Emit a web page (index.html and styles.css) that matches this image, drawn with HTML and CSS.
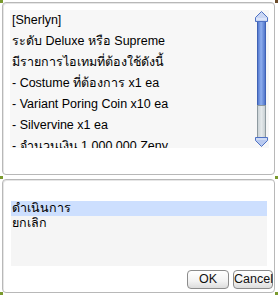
FILE: index.html
```html
<!DOCTYPE html>
<html>
<head>
<meta charset="utf-8">
<link rel="stylesheet" href="styles.css">
</head>
<body>
<div class="frame">
  <div class="panel top">
    <div class="textarea">
      <div class="lines">
        <div>[Sherlyn]</div>
        <div>ระดับ Deluxe หรือ Supreme</div>
        <div>มีรายการไอเทมที่ต้องใช้ดังนี้</div>
        <div>- Costume ที่ต้องการ x1 ea</div>
        <div>- Variant Poring Coin x10 ea</div>
        <div>- Silvervine x1 ea</div>
        <div>- จำนวนเงิน 1,000,000 Zeny</div>
      </div>
      <svg class="scroll" width="14" height="138" viewBox="0 0 14 138">
        <defs>
          <linearGradient id="thumb" x1="0" x2="1" y1="0" y2="0">
            <stop offset="0" stop-color="#4d73cc"/>
            <stop offset="0.45" stop-color="#8eaeee"/>
            <stop offset="1" stop-color="#4a6fc6"/>
          </linearGradient>
          <linearGradient id="track" x1="0" x2="1" y1="0" y2="0">
            <stop offset="0" stop-color="#c8d0d4"/>
            <stop offset="0.5" stop-color="#e4e9eb"/>
            <stop offset="1" stop-color="#c4ccd0"/>
          </linearGradient>
        </defs>
        <rect x="2.5" y="11.5" width="8" height="84" fill="url(#thumb)" stroke="#3f62b4"/>
        <rect x="2.5" y="95.5" width="8" height="32" fill="url(#track)" stroke="#8e9aa0"/>
        <polygon points="6.5,1.5 12.5,7.5 12.5,11.5 0.5,11.5 0.5,7.5" fill="#c9d6f3" stroke="#4f72c4"/>
        <line x1="1" y1="9" x2="12" y2="9" stroke="#eef3ff"/>
        <polygon points="0.5,127.5 12.5,127.5 12.5,130.5 6.5,136.5 0.5,130.5" fill="#b8c9ef" stroke="#4f72c4"/>
        <line x1="1" y1="129" x2="12" y2="129" stroke="#e6edfc"/>
      </svg>
    </div>
  </div>
  <div class="panel bottom">
    <div class="list">
      <div class="item selected">ดำเนินการ</div>
      <div class="item">ยกเลิก</div>
    </div>
    <div class="buttons">
      <button class="btn ok">OK</button>
      <button class="btn cancel">Cancel</button>
    </div>
  </div>
  <span class="mark tl"></span>
  <span class="mark tr"></span>
  <span class="mark ml"></span>
  <span class="mark mr"></span>
  <span class="mark bl"></span>
  <span class="mark br"></span>
</div>
</body>
</html>
```
FILE: styles.css
```css
html, body {
  margin: 0;
  padding: 0;
  background: #ffffff;
}
body {
  width: 278px;
  height: 295px;
  overflow: hidden;
  font-family: "DejaVu Sans", "Noto Sans", "Liberation Sans", sans-serif;
  font-size: 12px;
  color: #000;
}
.frame {
  position: relative;
  width: 278px;
  height: 295px;
  padding: 2px 3px 2px 2px;
  box-sizing: border-box;
  display: flex;
  flex-direction: column;
  gap: 4px;
}
.panel {
  border: 1px solid #b8b8b8;
  border-radius: 4px;
  box-shadow: inset 1px 1px 0 #e6e6e6;
  background: #fff;
}
.panel.top {
  height: 173px;
  box-sizing: border-box;
  padding: 7px 5px 0 7px;
}
.textarea {
  height: 138px;
  background: #f7f7f7;
  display: flex;
  overflow: hidden;
}
.lines {
  flex: 1;
  padding-left: 2px;
  line-height: 21px;
  font-family: "Liberation Sans", "Noto Sans", sans-serif;
  font-size: 12.5px;
  white-space: nowrap;
  overflow: hidden;
}
.scroll {
  flex: none;
  display: block;
}
.panel.bottom {
  flex: 1;
  padding: 21px 7px 2px 8px;
  display: flex;
  flex-direction: column;
}
.list {
  height: 65px;
  background: #f5f5f5;
  font-family: "Liberation Sans", "Noto Sans", sans-serif;
  font-size: 12.5px;
}
.item {
  height: 15px;
  line-height: 15px;
  padding-left: 1px;
}
.item.selected {
  background: #cddffe;
}
.buttons {
  display: flex;
  justify-content: flex-end;
  gap: 4px;
  margin-top: 4px;
  margin-right: -6px;
}
.btn {
  height: 19px;
  padding: 0;
  border: 1px solid #8c8c8c;
  border-radius: 4px;
  background: linear-gradient(#ffffff, #f2f2f2 60%, #dcdcdc);
  font-family: "Liberation Sans", sans-serif;
  font-size: 12.5px;
  color: #111;
  line-height: 17px;
}
.btn.ok { width: 42px; }
.btn.cancel { width: 40px; }
.mark {
  position: absolute;
  width: 3px;
  height: 3px;
  background: #7a9a2e;
}
.mark.tl { left: 0; top: 0; }
.mark.tr { right: 0; top: 0; background: #6b4b2a; }
.mark.ml { left: 0; top: 176px; }
.mark.mr { right: 0; top: 176px; }
.mark.bl { left: 0; bottom: 0; }
.mark.br { right: 0; bottom: 0; }
```
